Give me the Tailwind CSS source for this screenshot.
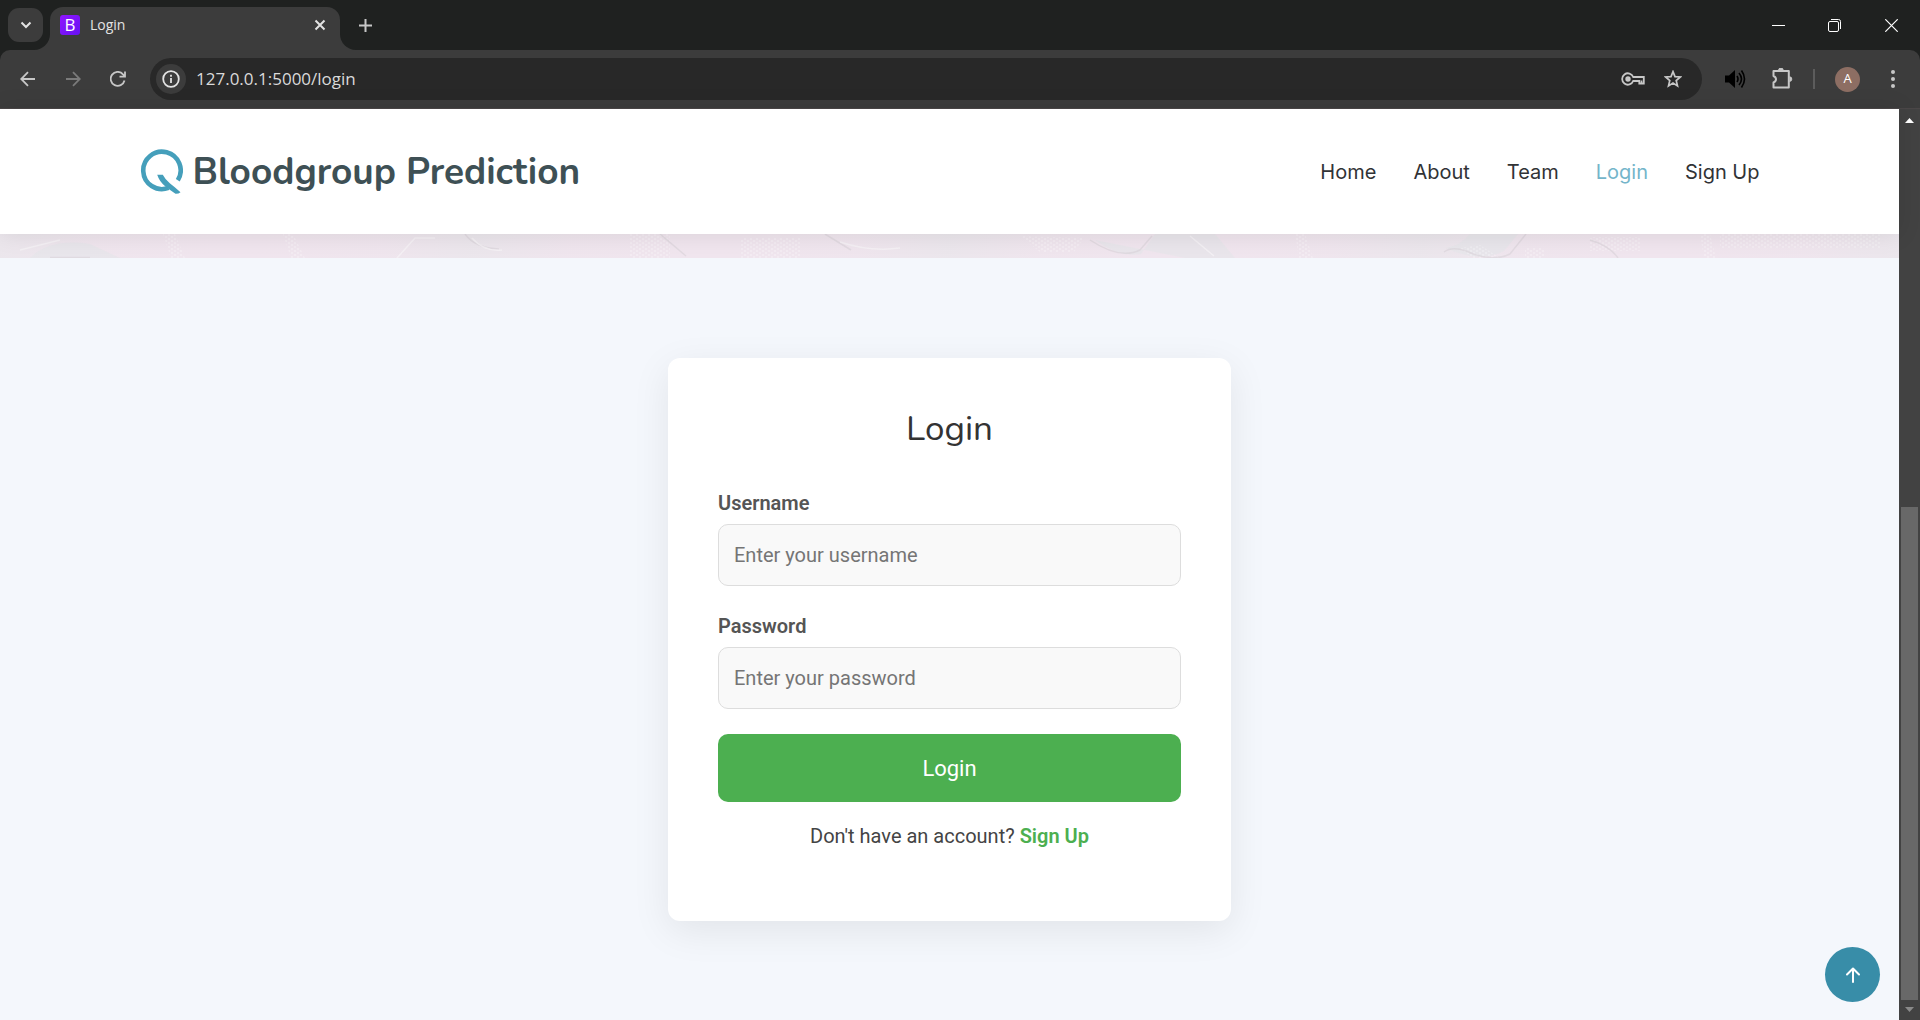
<!DOCTYPE html>
<html lang="en">
<head>
<meta charset="utf-8">
<title>Login</title>
<script src="https://cdn.jsdelivr.net/npm/@tailwindcss/browser@4"></script>
</head>
<body class="flex h-screen flex-col overflow-hidden bg-[#1f2120] font-[Roboto,sans-serif]">

<!-- Browser window: tab strip -->
<div class="flex h-[50px] shrink-0 items-start bg-[#1f2120] font-['Open_Sans',sans-serif]">
  <div class="flex h-full items-start bg-[#3c3c3c]">
    <div class="h-full w-[50px] rounded-br-[16px] bg-[#1f2120] pt-2 pl-2">
      <button aria-label="Search tabs" class="flex h-[34px] w-[35px] items-center justify-center rounded-[11px] bg-[#3c3c3c]">
        <svg class="size-3" viewBox="0 0 12 12" fill="none" stroke="#e3e3e3" stroke-width="2"><path d="M1.500 3.500 6 8l4.500-4.500"/></svg>
      </button>
    </div>
  </div>
  <div class="flex h-full w-[290px] bg-[#1f2120] pt-[7px]">
    <div class="flex w-full items-center gap-[10px] rounded-t-[13px] bg-[#3c3c3c] pr-[10px] pb-[7px] pl-[10px]">
      <span class="flex size-5 items-center justify-center rounded-[3px] bg-linear-to-br from-[#9013fe] to-[#6610f2] text-[17px] leading-5 text-white">B</span>
      <span class="flex-1 text-[14px] leading-5 text-[#e3e3e3]">Login</span>
      <button aria-label="Close tab" class="flex size-5 items-center justify-center">
        <svg class="size-3" viewBox="0 0 12 12" fill="none" stroke="#e3e3e3" stroke-width="2"><path d="m1.500 1.500 9 9m0-9-9 9"/></svg>
      </button>
    </div>
  </div>
  <div class="h-full flex-1 bg-[#3c3c3c]">
    <div class="flex h-full items-center justify-between rounded-bl-[16px] bg-[#1f2120] pl-[17px]">
      <button aria-label="New tab" class="flex size-4 items-center justify-center">
        <svg class="size-[13px]" viewBox="0 0 13 13" fill="none" stroke="#c7c7c7" stroke-width="2"><path d="M6.500 0v13M0 6.500h13"/></svg>
      </button>
      <div class="flex h-full">
        <button aria-label="Minimize" class="flex w-14 items-center justify-center"><svg class="size-[13px]" viewBox="0 0 13 13" stroke="#fff"><path d="M0 6.500h13"/></svg></button>
        <button aria-label="Restore" class="flex w-14 items-center justify-center"><svg class="size-[13px]" viewBox="0 0 13 13" fill="none" stroke="#fff"><rect x=".5" y="2.500" width="10" height="10" rx="1.500"/><path d="M3 .5h7.500a2 2 0 0 1 2 2V10"/></svg></button>
        <button aria-label="Close" class="flex w-[58px] items-center justify-center"><svg class="size-[13px]" viewBox="0 0 13 13" stroke="#fff" stroke-width="1.200"><path d="m.3.300 12.400 12.400m0-12.400L.3 12.700"/></svg></button>
      </div>
    </div>
  </div>
</div>

<!-- Toolbar -->
<div class="h-[59px] shrink-0 bg-[#1f2120] font-['Open_Sans',sans-serif]">
  <div class="flex h-full items-center rounded-t-[10px] border-b border-[#4b4748] bg-[#3c3c3c] pr-6 pl-5">
    <div class="flex w-[130px] gap-[29px]">
      <button aria-label="Back"><svg class="size-4" viewBox="0 0 16 16" fill="none" stroke="#c7c7c7" stroke-width="1.800"><path d="M15 8H1.500M8 1.200 1.200 8 8 14.800"/></svg></button>
      <button aria-label="Forward"><svg class="size-4" viewBox="0 0 16 16" fill="none" stroke="#7a7a7a" stroke-width="1.800"><path d="M1 8h13.500M8 1.200 14.800 8 8 14.800"/></svg></button>
      <button aria-label="Reload"><svg class="size-4" viewBox="0 0 16 16" fill="none" stroke="#c7c7c7" stroke-width="1.800"><path d="M14.500 9.500A7 7 0 1 1 13 3.300l1.500 1.500M15 .5v5.200H9.500"/></svg></button>
    </div>
    <div class="flex h-[42px] flex-1 items-center rounded-full bg-[#282828] pr-5 pl-[6px]">
      <button aria-label="View site information" class="flex size-[30px] items-center justify-center rounded-full bg-[#3c3c3c]">
        <svg class="size-[18px]" viewBox="0 0 18 18" fill="none" stroke="#e3e3e3" stroke-width="1.800"><circle cx="9" cy="9" r="7.800"/><path d="M9 8v5M9 4.800v1.900"/></svg>
      </button>
      <input aria-label="Address" value="127.0.0.1:5000/login" class="ml-[10px] w-0 flex-1 bg-transparent text-[17px] leading-6 text-[#dadada] outline-none">
      <button aria-label="Passwords" class="mr-[19px]"><svg class="h-4 w-6" viewBox="0 0 24 16" fill="none" stroke="#c7c7c7" stroke-width="1.800"><path d="M12.200 6h10.600v6.500h-4.500V10h-6.100a5.700 5.700 0 1 1 0-4z"/><path d="M20.500 9.500v3"/><circle cx="7" cy="8" r="1.800" fill="#c7c7c7"/></svg></button>
      <button aria-label="Bookmark this tab"><svg class="size-[18px]" viewBox="0 0 18 18" fill="none" stroke="#c7c7c7" stroke-width="1.700"><path d="m9 1.600 2 5 5.300.400-4.100 3.500 1.300 5.400L9 13l-4.500 2.900 1.300-5.400L1.700 7 7 6.600z"/></svg></button>
    </div>
    <div class="flex items-center pl-[22px]">
      <button aria-label="Sound"><svg class="h-5 w-[22px]" viewBox="0 0 22 20"><path d="M1 6.500h4L11 1v18l-6-5.500H1z"/><path d="M13 7q2 3 0 6M15 4q5 6 0 12M17.500 1.500q6 8.500 0 17" fill="none" stroke="#000" stroke-width="1.600"/></svg></button>
      <button aria-label="Extensions" class="ml-[25px]"><svg class="h-[22px] w-[22px]" viewBox="0 0 22 22" fill="none" stroke="#c7c7c7" stroke-width="2"><path d="M2.500 3h15.300v16.500H2.500v-5q2.500-1 2.500-3.200T2.500 8z" stroke-linejoin="round"/><path d="M7.500 2.500a2.400 2.400 0 0 1 4.800 0M18.500 8.800a2.200 2.200 0 0 1 0 4.600" fill="#c7c7c7" stroke="#c7c7c7" stroke-width="1"/></svg></button>
      <span class="ml-5 h-5 w-[2px] bg-[#5c5c5c]"></span>
      <button aria-label="Profile" class="ml-5 flex size-[25px] items-center justify-center rounded-full bg-[#8d6e63] text-[13px] text-white">A</button>
      <button aria-label="Menu" class="ml-[30px]"><svg class="h-5 w-[6px]" viewBox="0 0 6 20" fill="#c7c7c7"><circle cx="3" cy="3" r="2"/><circle cx="3" cy="10" r="2"/><circle cx="3" cy="17" r="2"/></svg></button>
    </div>
  </div>
</div>

<div class="flex min-h-0 flex-1">
  <!-- Web page -->
  <div class="relative flex min-w-0 flex-1 flex-col bg-[#f4f7fc]">
    <header class="z-10 bg-white shadow-[0_0_22px_rgba(0,0,0,0.1)]">
      <div class="mx-auto flex h-[125px] max-w-[1650px] items-center justify-between px-[15px]">
        <a href="#" class="flex items-center gap-[10px] text-[#3e5055]">
          <svg class="h-[46px] w-[43px]" viewBox="1 1 43 46" fill="none" stroke="#459fbb" stroke-width="4.600"><path d="M29.500 39.900A18.700 18.700 0 1 1 38.800 32.300"/><path d="M18.200 26.800h5.600q2.500 5 7 8.400t10.700 9q-2 1.800-5 1.600-5-3.300-10-7.300-6-4.500-8.300-11.700z" fill="#459fbb" stroke="none"/></svg>
          <span class="font-[Nunito,Lato,sans-serif] text-[37px] leading-[46px] font-bold">Bloodgroup Prediction</span>
        </a>
        <nav class="flex gap-[37px] font-[Inter,sans-serif] text-[20px] leading-[30px] text-[#313336]">
          <a href="#">Home</a>
          <a href="#">About</a>
          <a href="#">Team</a>
          <a href="#" class="text-[#74b5ca]">Login</a>
          <a href="#">Sign Up</a>
        </nav>
      </div>
    </header>

    <!-- Bottom edge of the painted hero background -->
    <svg class="h-6 w-full shrink-0 bg-[#f0e5ee]" viewBox="0 0 1899 24" preserveAspectRatio="none" fill="none">
      <defs>
        <pattern id="weave" width="6" height="4" patternUnits="userSpaceOnUse"><path d="M0 1h2M3 3h2" stroke="#fff" stroke-opacity=".45"/></pattern>
        <linearGradient id="fade" gradientUnits="userSpaceOnUse" x1="240" x2="470" y1="0" y2="40" spreadMethod="reflect"><stop offset="0" stop-color="#e8e7eb" stop-opacity="0"/><stop offset=".6" stop-color="#e8e7eb" stop-opacity=".1"/><stop offset="1" stop-color="#e8e7eb" stop-opacity=".6"/></linearGradient>
      </defs>
      <path d="M0 0h1899v24H0z" fill="url(#fade)"/>
      <path d="M30 24q20-20 60-14l30 14zM1470 0q-10 12-24 14 34 16 58 3l14-17zM1095 6q24 18 46 14l14-20h60l20 24h-50z" fill="#e6e5e9" fill-opacity=".7"/>
      <g fill="url(#weave)"><path d="M163 0h12l10 24h-14zM283 0h10l12 24h-14zM630 0h40v24h-40zM740 4h60v20h-60zM1020 2l64 2-10 14h-34zM1295 0h10l8 24h-14zM1460 14l20-3 20 13h-30zM1525 14h20v10h-20zM1590 3h50v14h-50zM1700 0h10l6 24h-12zM1720 0h160v14h-160z"/></g>
      <g stroke="#d8d2d9" stroke-opacity=".6" stroke-width="1.500"><path d="M50 23.500h40M465 0q10 14 34 15M660 0l26 22M825 0l26 16M1090 6q30 20 50 10l12-14M1444 18q8-6 22-1 26 12 44 3l16-20M1590 6q20 6 28 18"/></g>
      <g stroke="#f7f3f7" stroke-opacity=".7" stroke-width="1.500"><path d="M20 16l40-10M397 24l18-20h20M472 4q12 14 30 12M1190 2l24 20M840 8q30 10 60 6"/></g>
    </svg>

    <main class="flex flex-1 justify-center pt-[100px]">
      <form class="h-[563px] w-[563px] rounded-[12px] bg-white px-[50px] pt-[50px] shadow-[0_10px_38px_rgba(0,0,0,0.08)]">
        <h2 class="mb-[38px] text-center font-[Nunito,Lato,sans-serif] text-[35px] leading-[42px] text-[#333]">Login</h2>
        <div class="mb-[25px] flex flex-col gap-[6px]">
          <label for="username" class="text-[20px] leading-[30px] font-semibold text-[#555]">Username</label>
          <input id="username" type="text" placeholder="Enter your username" class="h-[62px] w-full rounded-[10px] border border-[#ddd] bg-[#f9f9f9] px-[15px] text-[20px] placeholder:text-[#757575]">
        </div>
        <div class="mb-[25px] flex flex-col gap-[6px]">
          <label for="password" class="text-[20px] leading-[30px] font-semibold text-[#555]">Password</label>
          <input id="password" type="password" placeholder="Enter your password" class="h-[62px] w-full rounded-[10px] border border-[#ddd] bg-[#f9f9f9] px-[15px] text-[20px] placeholder:text-[#757575]">
        </div>
        <button type="submit" class="mb-[19px] h-[68px] w-full rounded-[10px] bg-[#4caf50] text-[22px] text-white">Login</button>
        <p class="text-center text-[20px] leading-[30px] text-[#444]">Don't have an account? <a href="#" class="font-semibold text-[#4caf50]">Sign Up</a></p>
      </form>
    </main>

    <button aria-label="Back to top" class="absolute right-[19px] bottom-[18px] flex size-[55px] items-center justify-center rounded-full bg-[#388da8]">
      <svg class="size-4" viewBox="0 0 16 16" fill="none" stroke="#fff" stroke-width="2" stroke-linecap="round" stroke-linejoin="round"><path d="M8 15V1.500M2 7.500l6-6 6 6"/></svg>
    </button>
  </div>

  <!-- Scrollbar -->
  <div class="flex w-[21px] shrink-0 flex-col items-center justify-between bg-[#424242]">
    <svg class="mt-[9px] h-[5px] w-[9px]" viewBox="0 0 9 5" fill="#fff"><path d="M0 5 4.500 0 9 5z"/></svg>
    <div class="flex w-full flex-col items-center">
      <div class="h-[493px] w-[17px] bg-[#686868]"></div>
      <svg class="mt-[7px] mb-2 h-[5px] w-[9px]" viewBox="0 0 9 5" fill="#8a8a8a"><path d="M0 0h9L4.500 5z"/></svg>
    </div>
  </div>
</div>
</body>
</html>
